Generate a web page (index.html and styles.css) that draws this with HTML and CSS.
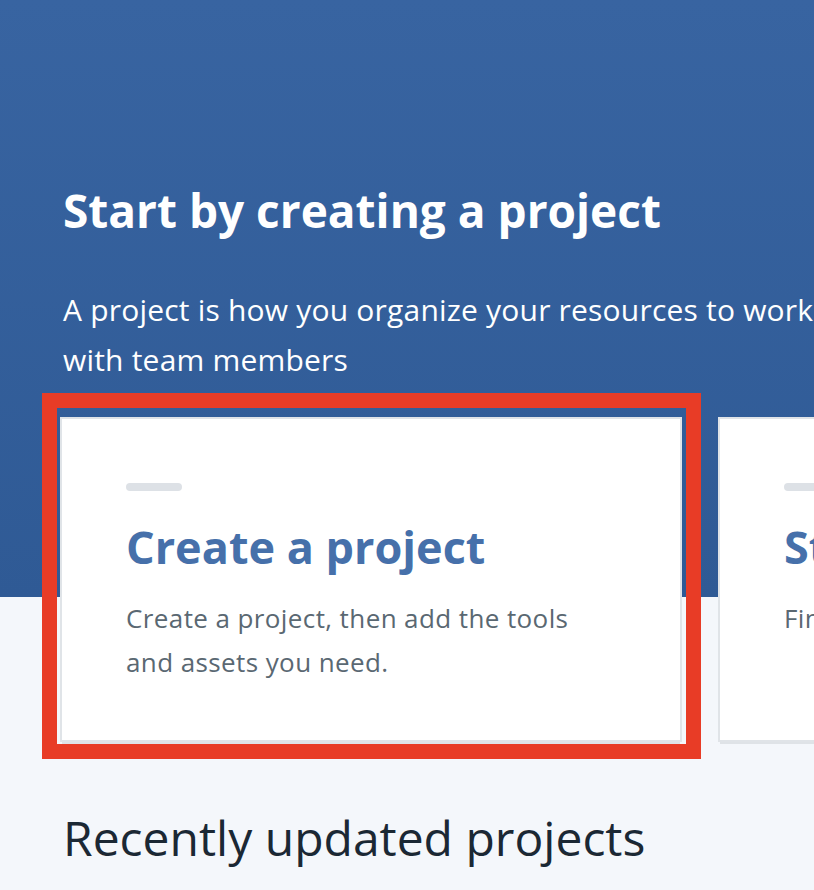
FILE: index.html
```html
<!DOCTYPE html>
<html lang="en">
<head>
<meta charset="utf-8">
<title>Start by creating a project</title>
<link rel="stylesheet" href="styles.css">
</head>
<body>
<div class="page">
  <section class="hero">
    <h1 class="hero-title">Start by creating a project</h1>
    <p class="hero-text">A project is how you organize your resources to work with team members</p>
  </section>
  <section class="cards">
    <div class="card card-highlighted">
      <span class="card-dash"></span>
      <h2 class="card-title">Create a project</h2>
      <p class="card-text">Create a project, then add the tools and assets you need.</p>
      <span class="highlight-box"></span>
    </div>
    <div class="card">
      <span class="card-dash"></span>
      <h2 class="card-title">Start with a sample</h2>
      <p class="card-text">Find a sample project.</p>
    </div>
  </section>
  <section class="recent">
    <h2 class="recent-title">Recently updated projects</h2>
  </section>
</div>
</body>
</html>
```
FILE: styles.css
```css
html, body {
  margin: 0;
  padding: 0;
}
body {
  width: 814px;
  height: 890px;
  overflow: hidden;
  background: #f4f7fb;
  font-family: "Open Sans", "Noto Sans", sans-serif;
}
.page {
  position: relative;
  min-height: 890px;
}
.hero {
  background: linear-gradient(180deg, #3864a1 0%, #2f5a95 100%);
  height: 597px;
  padding: 178px 0 0 63px;
  box-sizing: border-box;
  color: #ffffff;
}
.hero-title {
  margin: 0;
  font-size: 46px;
  font-weight: 700;
  line-height: 64px;
}
.hero-text {
  margin: 43px 0 0;
  width: 762px;
  font-size: 30px;
  line-height: 50px;
  letter-spacing: 0.2px;
  font-weight: 400;
}
.cards {
  display: flex;
  gap: 40px;
  margin-top: -178px;
  padding-left: 62px;
  width: max-content;
}
.card {
  position: relative;
  width: 618px;
  height: 321px;
  background: #ffffff;
  box-shadow: 0 0 0 2px #e0e4e8, 0 4px 0 0 #dfe3e7;
  box-sizing: border-box;
  padding: 64px 0 0 64px;
}
.card-dash {
  display: block;
  width: 56px;
  height: 8px;
  border-radius: 4px;
  background: #dde1e6;
}
.card-title {
  margin: 26px 0 0;
  font-size: 45px;
  font-weight: 700;
  line-height: 60px;
  color: #4670aa;
}
.card-text {
  margin: 19px 0 0;
  width: 460px;
  font-size: 26px;
  line-height: 44px;
  letter-spacing: 0.4px;
  color: #5a6872;
}
.highlight-box {
  position: absolute;
  left: -20px;
  top: -26px;
  right: -21px;
  bottom: -19px;
  border: 15px solid #e83c26;
  pointer-events: none;
}
.recent {
  padding: 68px 0 0 63px;
}
.recent-title {
  margin: 0;
  font-size: 48px;
  font-weight: 400;
  line-height: 60px;
  color: #1b2834;
}
```
